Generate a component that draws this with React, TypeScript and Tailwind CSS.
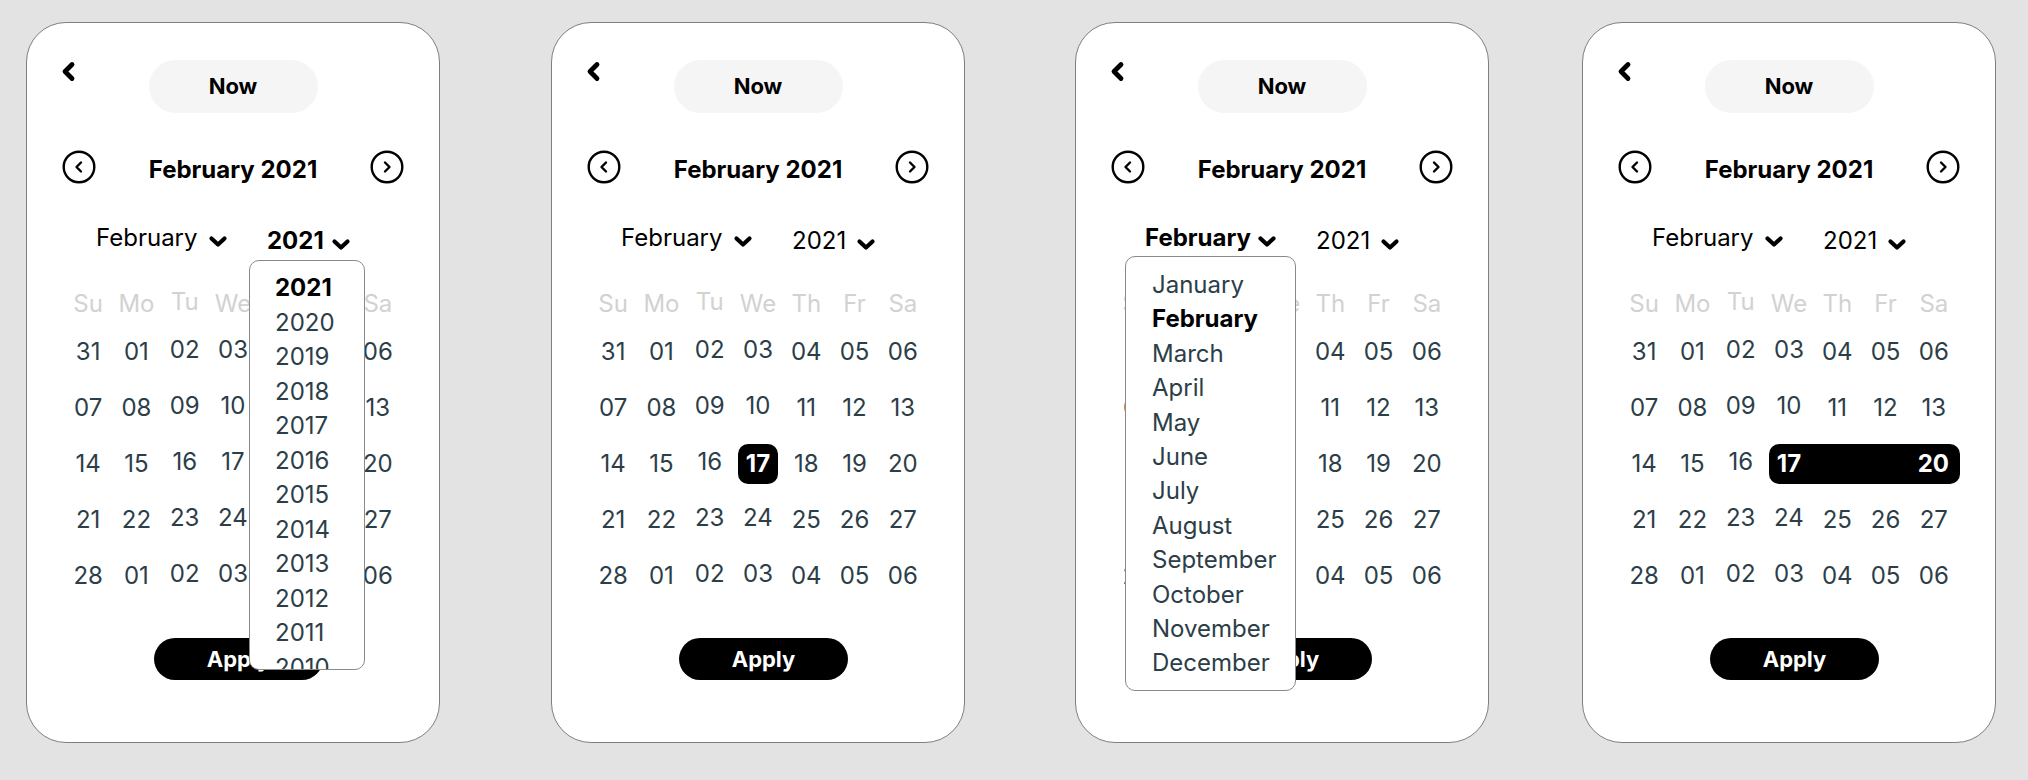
import React from 'react';

const weekdays = ['Su', 'Mo', 'Tu', 'We', 'Th', 'Fr', 'Sa'];
const weeks = [
  ['31', '01', '02', '03', '04', '05', '06'],
  ['07', '08', '09', '10', '11', '12', '13'],
  ['14', '15', '16', '17', '18', '19', '20'],
  ['21', '22', '23', '24', '25', '26', '27'],
  ['28', '01', '02', '03', '04', '05', '06'],
];
const months = ['January', 'February', 'March', 'April', 'May', 'June', 'July', 'August', 'September', 'October', 'November', 'December'];
const years = ['2021', '2020', '2019', '2018', '2017', '2016', '2015', '2014', '2013', '2012', '2011', '2010'];

type Variant = {
  margin: string;
  yearOpen?: boolean;
  monthOpen?: boolean;
  selection: 'none' | 'single' | 'range';
};

function BackIcon() {
  return (
    <svg width={15} height={21} viewBox="0 0 15 21" fill="none" stroke="currentColor" strokeWidth={4.8} strokeLinecap="round" strokeLinejoin="round" aria-hidden>
      <path d="M11 3.5 4 10.5l7 7" />
    </svg>
  );
}

function CircleArrow({ dir }: { dir: 'left' | 'right' }) {
  return (
    <svg width={34} height={34} viewBox="0 0 34 34" fill="none" stroke="currentColor" strokeWidth={2.4} strokeLinecap="round" strokeLinejoin="round" aria-hidden>
      <circle cx={17} cy={17} r={15.3} />
      {dir === 'left' ? <path d="M19 12.5 14.5 17l4.5 4.5" /> : <path d="M15 12.5 19.5 17 15 21.5" />}
    </svg>
  );
}

function ChevronDown() {
  return (
    <svg width={20} height={13} viewBox="0 0 20 13" fill="none" stroke="currentColor" strokeWidth={4.2} strokeLinecap="round" strokeLinejoin="round" aria-hidden>
      <path d="M3.5 3.5 10 9.5l6.5-6" />
    </svg>
  );
}

function DayCell({ value, col }: { value: string; col: number }) {
  const lift = col === 2 || col === 3 ? '-translate-y-[2px]' : '';
  return (
    <div className={`flex items-center justify-center h-[56px] text-[24px] text-[#2c3e48] ${lift}`}>{value}</div>
  );
}

function DatePickerCard({ margin, yearOpen, monthOpen, selection }: Variant) {
  return (
    <div className={`relative shrink-0 w-[414px] h-[721px] rounded-[40px] border border-[#7f7f7f] bg-white ${margin}`}>
      <div className="grid grid-cols-[1fr_169px_1fr] items-start pt-[37px]">
        <div className="pl-[34px] pt-[1px] text-black">
          <BackIcon />
        </div>
        <button type="button" className="h-[53px] rounded-full bg-[#f5f5f5] text-[22px] font-bold text-black">
          Now
        </button>
        <div />
      </div>

      <div className="flex items-center justify-between px-[35px] mt-[37px] h-[34px]">
        <CircleArrow dir="left" />
        <span className="pt-[5px] text-[24px] font-bold text-black leading-[30px]">February 2021</span>
        <CircleArrow dir="right" />
      </div>

      <div className="flex items-start pl-[69px] mt-[39px] h-[32px] text-black">
        <span className={`w-[112px] text-[24px] leading-[30px] ${monthOpen ? 'font-bold' : ''}`}>February</span>
        <span className="pt-[12px]"><ChevronDown /></span>
        <span className={`ml-[39px] w-[64px] text-[24px] leading-[30px] pt-[3px] ${yearOpen ? 'font-bold' : ''}`}>2021</span>
        <span className="pt-[15px]"><ChevronDown /></span>
      </div>

      <div className="mx-auto w-[338px] mt-[29px]">
        <div className="grid grid-cols-7 h-[40px]">
          {weekdays.map((d, i) => (
            <div key={d} className={`flex items-center justify-center text-[24px] text-[#d2d2d2] ${i === 2 ? '-translate-y-[2px]' : ''}`}>
              {d}
            </div>
          ))}
        </div>
        {weeks.map((week, w) => {
          if (w === 2 && selection === 'range') {
            return (
              <div key={w} className="grid grid-cols-7 h-[56px] items-center">
                {week.slice(0, 3).map((d, i) => (
                  <DayCell key={i} value={d} col={i} />
                ))}
                <div className="col-span-4 ml-[4px] -mr-[2px] h-[40px] rounded-[10px] bg-black flex items-center justify-between pl-[8px] pr-[11px] text-[24px] font-bold text-white">
                  <span>17</span>
                  <span>20</span>
                </div>
              </div>
            );
          }
          return (
            <div key={w} className="grid grid-cols-7 h-[56px] items-center">
              {week.map((d, i) =>
                w === 2 && i === 3 && selection === 'single' ? (
                  <div key={i} className="flex justify-center">
                    <div className="w-[40px] h-[40px] rounded-[10px] bg-black flex items-center justify-center text-[24px] font-bold text-white">
                      {d}
                    </div>
                  </div>
                ) : (
                  <DayCell key={i} value={d} col={i} />
                )
              )}
            </div>
          );
        })}
      </div>

      <button type="button" className="block ml-[127px] mt-[34px] w-[169px] h-[42px] rounded-full bg-black text-[22px] font-bold text-white">
        Apply
      </button>

      {yearOpen && (
        <div className="absolute left-[222px] top-[237px] w-[116px] h-[410px] overflow-hidden rounded-[10px] border border-[#8a8a8a] bg-white pl-[25px] pt-[10px]">
          {years.map((y, i) => (
            <div key={y} className={`text-[24px] leading-[34.5px] ${i === 0 ? 'font-bold text-black' : 'text-[#2c3e48]'}`}>
              {y}
            </div>
          ))}
        </div>
      )}

      {monthOpen && (
        <div className="absolute left-[49px] top-[233px] w-[171px] h-[435px] overflow-hidden rounded-[10px] border border-[#8a8a8a] bg-white pl-[26px] pt-[11px]">
          {months.map((m, i) => (
            <div key={m} className={`text-[24px] leading-[34.4px] ${i === 1 ? 'font-bold text-black' : 'text-[#2c3e48]'}`}>
              {m}
            </div>
          ))}
        </div>
      )}
    </div>
  );
}

export default function App() {
  return (
    <div className="min-h-[780px] w-[2028px] bg-[#e3e3e3] flex items-start pt-[22px] font-['Inter',sans-serif]">
      <DatePickerCard margin="ml-[26px]" yearOpen selection="none" />
      <DatePickerCard margin="ml-[111px]" selection="single" />
      <DatePickerCard margin="ml-[110px]" monthOpen selection="none" />
      <DatePickerCard margin="ml-[93px]" selection="range" />
    </div>
  );
}
